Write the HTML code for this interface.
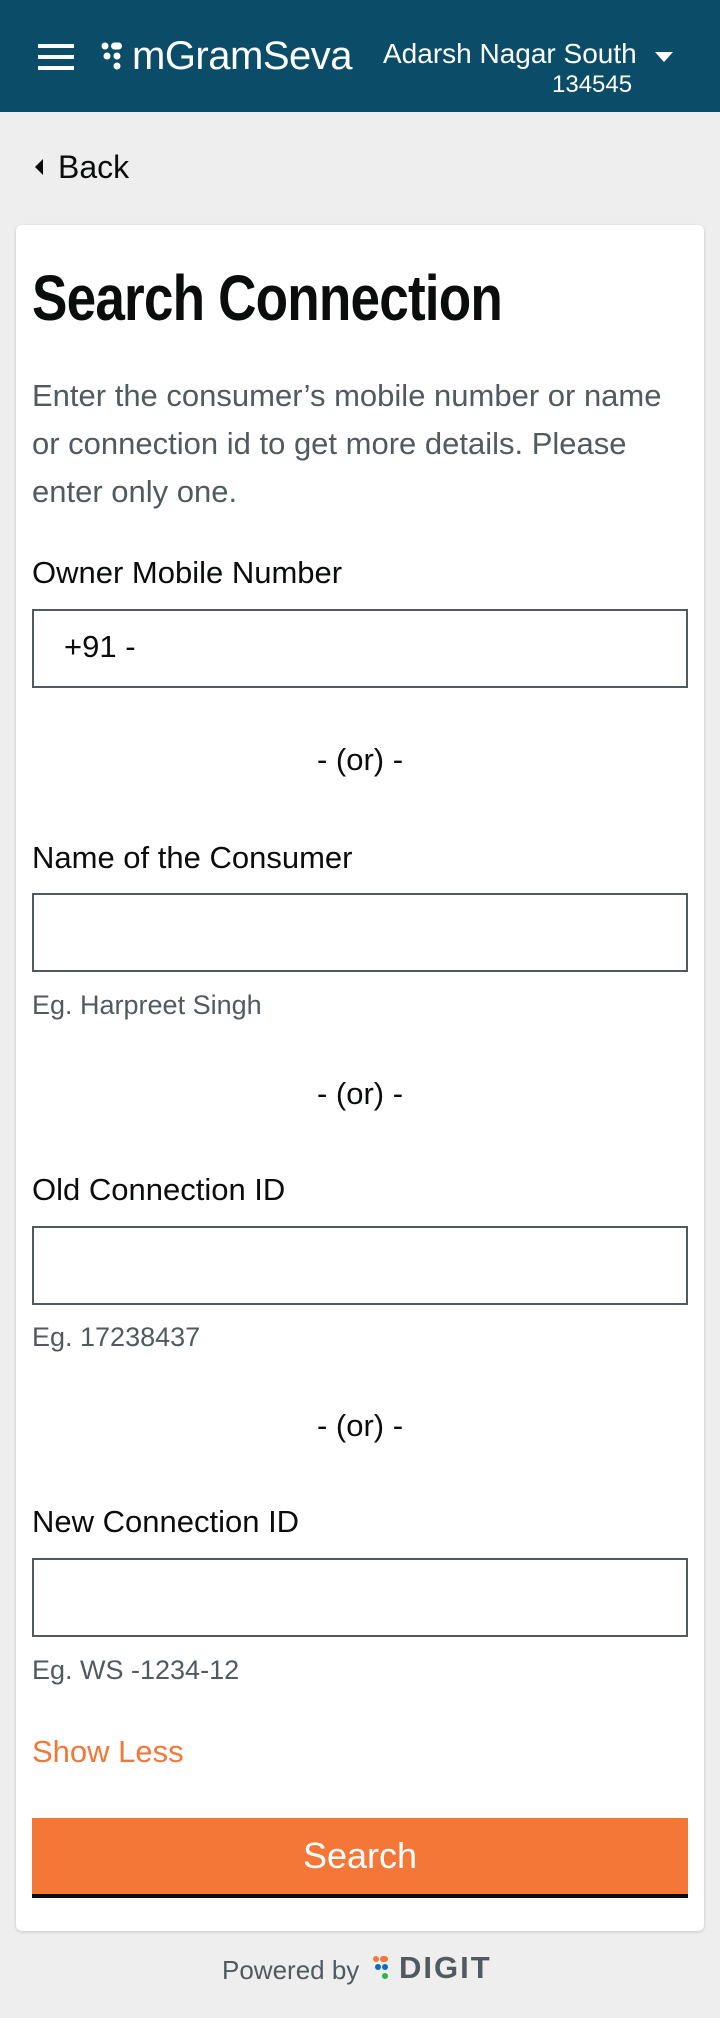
<!DOCTYPE html>
<html><head><meta charset="utf-8"><style>
*{margin:0;padding:0;box-sizing:border-box}
body{width:720px;height:2018px;background:#eeeeee;font-family:"Liberation Sans",sans-serif;position:relative;overflow:hidden}
.a{position:absolute;white-space:nowrap}
.hdr{position:absolute;left:0;top:0;width:720px;height:112px;background:#0b4c68}
.card{position:absolute;left:16px;top:225px;width:688px;height:1706px;background:#fff;border-radius:6px;box-shadow:0 1px 3px rgba(0,0,0,.18)}
.lbl{font-size:31px;color:#0b0c0c;left:32px;line-height:34px}
.inp{position:absolute;left:32px;width:656px;height:79px;border:2px solid #505a5f;background:#fff}
.hint{font-size:27px;color:#505a5f;left:32px;line-height:28px}
.or{font-size:31px;color:#0b0c0c;left:0;width:720px;text-align:center;line-height:34px}
.desc{left:32px;top:372px;font-size:31px;color:#505a5f;line-height:48px;white-space:normal;width:665px}
</style></head><body>
<div class="hdr">
 <div class="a" style="left:38px;top:44px;width:36px;height:4px;background:#fff"></div>
 <div class="a" style="left:38px;top:55px;width:36px;height:4px;background:#fff"></div>
 <div class="a" style="left:38px;top:66px;width:36px;height:4px;background:#fff"></div>
 <svg class="a" style="left:100px;top:41px" width="24" height="30" viewBox="0 0 24 30">
  <circle cx="5" cy="5" r="3.5" fill="#fff"/><rect x="11" y="1.5" width="11" height="7" rx="3.5" fill="#fff"/>
  <circle cx="7" cy="15" r="3.5" fill="#fff"/><circle cx="17" cy="15" r="3.5" fill="#fff"/>
  <circle cx="17" cy="25" r="3.5" fill="#fff"/></svg>
 <div class="a" style="left:132px;top:33px;font-size:40px;color:#fff;line-height:46px;letter-spacing:-0.5px">mGramSeva</div>
 <div class="a" style="left:383px;top:38px;font-size:28px;color:#fff;line-height:32px">Adarsh Nagar South</div>
 <div class="a" style="left:552px;top:71px;width:80px;text-align:right;font-size:24px;color:#fff;line-height:28px">134545</div>
 <div class="a" style="left:655px;top:52px;width:0;height:0;border-left:9px solid transparent;border-right:9px solid transparent;border-top:10px solid #fff"></div>
</div>
<div class="a" style="left:35px;top:159px;width:0;height:0;border-top:8px solid transparent;border-bottom:8px solid transparent;border-right:8px solid #0b0c0c"></div>
<div class="a" style="left:58px;top:149px;font-size:32px;color:#0b0c0c;line-height:36px">Back</div>
<div class="card"></div>
<div class="a" style="left:32px;top:262px;font-size:64px;font-weight:bold;color:#0b0c0c;line-height:72px;transform:scaleX(0.83);transform-origin:0 0;letter-spacing:-1px">Search Connection</div>
<div class="a desc">Enter the consumer’s mobile number or name or connection id to get more details. Please enter only one.</div>
<div class="a lbl" style="top:556px">Owner Mobile Number</div>
<div class="inp" style="top:609px"></div>
<div class="a" style="left:64px;top:630px;font-size:31px;color:#0b0c0c;line-height:34px">+91 -</div>
<div class="a or" style="top:743px">- (or) -</div>
<div class="a lbl" style="top:841px">Name of the Consumer</div>
<div class="inp" style="top:893px"></div>
<div class="a hint" style="top:991px">Eg. Harpreet Singh</div>
<div class="a or" style="top:1077px">- (or) -</div>
<div class="a lbl" style="top:1173px">Old Connection ID</div>
<div class="inp" style="top:1226px"></div>
<div class="a hint" style="top:1323px">Eg. 17238437</div>
<div class="a or" style="top:1409px">- (or) -</div>
<div class="a lbl" style="top:1505px">New Connection ID</div>
<div class="inp" style="top:1558px"></div>
<div class="a hint" style="top:1656px">Eg. WS -1234-12</div>
<div class="a" style="left:32px;top:1735px;font-size:31px;color:#f47738;line-height:34px">Show Less</div>
<div class="a" style="left:32px;top:1818px;width:656px;height:80px;background:#f47738;border-bottom:4px solid #0b0c0c;color:#fff;font-size:36px;text-align:center;line-height:76px">Search</div>
<div class="a" style="left:222px;top:1956px;font-size:26px;color:#505a5f;line-height:28px">Powered by</div>
<svg class="a" style="left:372px;top:1955px" width="18" height="26" viewBox="0 0 18 26">
 <circle cx="4" cy="4" r="3" fill="#f47738"/><rect x="8" y="1" width="8" height="6" rx="3" fill="#f47738"/>
 <circle cx="6" cy="12" r="3" fill="#0a6cc4"/><circle cx="13" cy="12" r="3" fill="#0a6cc4"/>
 <circle cx="13" cy="21" r="3" fill="#2fb34a"/></svg>
<div class="a" style="left:399px;top:1952px;font-size:31px;font-weight:bold;color:#505a5f;line-height:32px;letter-spacing:2px">DIGIT</div>
</body></html>
